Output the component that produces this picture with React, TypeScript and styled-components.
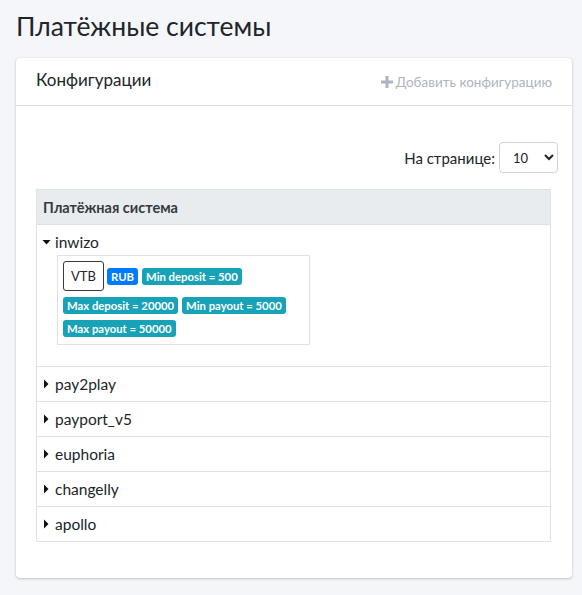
import React, { useState } from 'react';
import styled, { createGlobalStyle } from 'styled-components';

const GlobalStyle = createGlobalStyle`
  html, body {
    margin: 0;
    padding: 0;
    background: #f4f6f9;
    font-family: Lato, "Noto Sans", sans-serif;
    color: #212529;
  }
  * {
    box-sizing: border-box;
  }
`;

const Page = styled.div`
  padding: 9px 10px 18px 16px;
`;

const Title = styled.h1`
  margin: 0 0 15px;
  font-size: 26.5px;
  font-weight: 400;
  line-height: 34px;
  color: #212529;
`;

const Card = styled.div`
  background: #fff;
  border-radius: 4px;
  box-shadow: 0 0 1px rgba(0, 0, 0, 0.125), 0 1px 3px rgba(0, 0, 0, 0.2);
`;

const CardHeader = styled.div`
  display: flex;
  align-items: center;
  justify-content: space-between;
  height: 48px;
  padding: 0 20px;
  border-bottom: 1px solid rgba(0, 0, 0, 0.125);
`;

const CardTitle = styled.div`
  font-size: 17px;
  line-height: 24px;
  margin-top: -3px;
`;

const AddButton = styled.button`
  display: flex;
  align-items: center;
  gap: 2px;
  border: 0;
  background: none;
  padding: 0;
  font-family: inherit;
  font-size: 13.5px;
  color: #adb5bd;
  cursor: pointer;
`;

const CardBody = styled.div`
  padding: 36px 21px 36px 20px;
`;

const LengthRow = styled.div`
  display: flex;
  justify-content: flex-end;
  align-items: center;
  gap: 4px;
  margin-right: -7px;
  margin-bottom: 16px;
  font-size: 15px;
`;

const Select = styled.select`
  width: 59px;
  height: 31px;
  padding: 0 6px 0 9px;
  border: 1px solid #ced4da;
  border-radius: 4px;
  background: #fff;
  font-family: inherit;
  font-size: 13px;
  color: #212529;
`;

const Table = styled.div`
  border: 1px solid #dee2e6;
`;

const HeadCell = styled.div`
  height: 35px;
  display: flex;
  align-items: center;
  padding: 0 6px;
  background: #e9ecef;
  border-bottom: 1px solid #dee2e6;
  font-weight: 700;
  font-size: 14.5px;
  color: #343a40;
`;

const Row = styled.div<{ $open: boolean }>`
  padding: 7px 5px ${(p) => (p.$open ? '21px' : '7px')};
  min-height: 35px;
  & + & {
    border-top: 1px solid #dee2e6;
  }
`;

const Toggle = styled.div`
  display: flex;
  align-items: center;
  gap: 4px;
  font-size: 15.5px;
  line-height: 20px;
  cursor: pointer;
`;

const Caret = styled.svg`
  width: 9px;
  height: 10px;
  flex: none;
`;

const Details = styled.div`
  margin: 3px 0 0 15px;
  width: 253px;
  border: 1px solid #dee2e6;
  padding: 5px 5px 7px;
  display: flex;
  flex-direction: column;
  gap: 6px;
`;

const BadgeLine = styled.div`
  display: flex;
  align-items: center;
  gap: 4px;
`;

const BankBox = styled.div`
  width: 41px;
  height: 30px;
  border: 1px solid #343a40;
  border-radius: 3px;
  display: flex;
  align-items: center;
  justify-content: center;
  font-size: 13px;
  margin-right: -1px;
`;

const Badge = styled.span<{ $tone: 'primary' | 'info' }>`
  display: inline-flex;
  align-items: center;
  height: 17px;
  padding: 0 4px;
  border-radius: 3px;
  font-size: 11.3px;
  font-weight: 700;
  color: #fff;
  white-space: nowrap;
  background: ${(p) => (p.$tone === 'primary' ? '#007bff' : '#17a2b8')};
`;

const systems = ['inwizo', 'pay2play', 'payport_v5', 'euphoria', 'changelly', 'apollo'];

const CaretIcon = ({ open }: { open: boolean }) =>
  open ? (
    <Caret viewBox="0 0 9 10">
      <path d="M0.5 3h8L4.5 7.5z" fill="#111" />
    </Caret>
  ) : (
    <Caret viewBox="0 0 9 10">
      <path d="M2 0.5v9L6.5 5z" fill="#111" />
    </Caret>
  );

const App = () => {
  const [openId, setOpenId] = useState('inwizo');

  return (
    <Page>
      <GlobalStyle />
      <Title>Платёжные системы</Title>
      <Card>
        <CardHeader>
          <CardTitle>Конфигурации</CardTitle>
          <AddButton>
            <svg width="14" height="14" viewBox="0 0 14 14">
              <path d="M5.5 1h3v4.5H13v3H8.5V13h-3V8.5H1v-3h4.5z" fill="#adb5bd" />
            </svg>
            Добавить конфигурацию
          </AddButton>
        </CardHeader>
        <CardBody>
          <LengthRow>
            На странице:
            <Select defaultValue="10">
              <option>10</option>
              <option>25</option>
              <option>50</option>
            </Select>
          </LengthRow>
          <Table>
            <HeadCell>Платёжная система</HeadCell>
            {systems.map((name) => (
              <Row key={name} $open={openId === name}>
                <Toggle onClick={() => setOpenId(openId === name ? '' : name)}>
                  <CaretIcon open={openId === name} />
                  {name}
                </Toggle>
                {openId === name && (
                  <Details>
                    <BadgeLine>
                      <BankBox>VTB</BankBox>
                      <Badge $tone="primary">RUB</Badge>
                      <Badge $tone="info">Min deposit = 500</Badge>
                    </BadgeLine>
                    <BadgeLine>
                      <Badge $tone="info">Max deposit = 20000</Badge>
                      <Badge $tone="info">Min payout = 5000</Badge>
                    </BadgeLine>
                    <BadgeLine>
                      <Badge $tone="info">Max payout = 50000</Badge>
                    </BadgeLine>
                  </Details>
                )}
              </Row>
            ))}
          </Table>
        </CardBody>
      </Card>
    </Page>
  );
};

export default App;
